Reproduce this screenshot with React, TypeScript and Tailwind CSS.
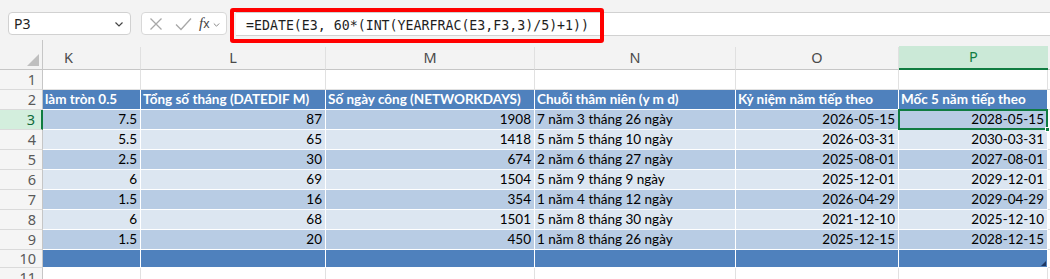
import React from "react";

const W = {
  rh: "w-[43px]",
  K: "w-[98px]",
  L: "w-[185px]",
  M: "w-[209px]",
  N: "w-[201px]",
  O: "w-[163px]",
  P: "w-[149px]",
};

const colKeys = ["K", "L", "M", "N", "O", "P"] as const;
const colW = [W.K, W.L, W.M, W.N, W.O, W.P];

const headers = [
  "làm tròn 0.5",
  "Tổng số tháng (DATEDIF M)",
  "Số ngày công (NETWORKDAYS)",
  "Chuỗi thâm niên (y m d)",
  "Kỷ niệm năm tiếp theo",
  "Mốc 5 năm tiếp theo",
];

const data: string[][] = [
  ["7.5", "87", "1908", "7 năm 3 tháng 26 ngày", "2026-05-15", "2028-05-15"],
  ["5.5", "65", "1418", "5 năm 5 tháng 10 ngày", "2026-03-31", "2030-03-31"],
  ["2.5", "30", "674", "2 năm 6 tháng 27 ngày", "2025-08-01", "2027-08-01"],
  ["6", "69", "1504", "5 năm 9 tháng 9 ngày", "2025-12-01", "2029-12-01"],
  ["1.5", "16", "354", "1 năm 4 tháng 12 ngày", "2026-04-29", "2029-04-29"],
  ["6", "68", "1501", "5 năm 8 tháng 30 ngày", "2021-12-10", "2025-12-10"],
  ["1.5", "20", "450", "1 năm 8 tháng 26 ngày", "2025-12-15", "2028-12-15"],
];

const uiFont = { fontFamily: '"Noto Sans", "Open Sans", sans-serif' };
const cellFont = { fontFamily: 'Lato, "Noto Sans", sans-serif' };

function RowHeader({ n, h, active }: { n: number; h: string; active?: boolean }) {
  return (
    <div
      className={`${W.rh} ${h} shrink-0 flex items-center justify-end pr-[6px] text-[14.5px] border-b border-[#dadada] ${
        active
          ? "bg-[#d3eedd] text-[#0f6a3a] border-r-2 border-r-[#107c41]"
          : "bg-[#f5f5f5] text-[#5a5a5a] border-r border-r-[#c6c6c6]"
      }`}
      style={uiFont}
    >
      {n}
    </div>
  );
}

function EmptyRow({ n, h }: { n: number; h: string }) {
  return (
    <div className={`flex ${h}`}>
      <RowHeader n={n} h={h} />
      {colW.map((w, i) => (
        <div key={i} className={`${w} shrink-0 bg-white border-r border-b border-[#e1e1e1]`} />
      ))}
      <div className="flex-1 bg-white border-b border-[#e1e1e1]" />
    </div>
  );
}

export default function App() {
  return (
    <div className="w-[1050px] h-[279px] overflow-hidden bg-[#f3f3f3] text-black" style={cellFont}>
      {/* Formula bar area */}
      <div className="h-[40px] flex items-start pt-[8px]">
        <div className="ml-[8px] mt-[4px] w-[123px] h-[23px] bg-white border border-[#d1d1d1] rounded-[4px] flex items-center justify-between pl-[5px] pr-[5px]">
          <span className="text-[14px] text-[#222]" style={uiFont}>P3</span>
          <svg width="12" height="12" viewBox="0 0 12 12" className="text-[#444]">
            <path d="M2.5 4.5 L6 8 L9.5 4.5" fill="none" stroke="currentColor" strokeWidth="1.2" />
          </svg>
        </div>
        <div className="ml-[10px] mt-[4px] w-[86px] h-[23px] bg-white border border-[#d8d8d8] rounded-[4px] flex items-center pl-[7px]">
          <svg width="14" height="14" viewBox="0 0 14 14" className="text-[#a8a8a8]">
            <path d="M1.5 1.5 L12.5 12.5 M12.5 1.5 L1.5 12.5" stroke="currentColor" strokeWidth="1.3" fill="none" />
          </svg>
          <svg width="17" height="14" viewBox="0 0 17 14" className="ml-[12px] text-[#a8a8a8]">
            <path d="M1 7.5 L6 12.5 L16 1.5" stroke="currentColor" strokeWidth="1.3" fill="none" />
          </svg>
          <span className="ml-[7px] text-[15px] italic text-[#444] leading-none" style={{ fontFamily: '"Liberation Serif", serif' }}>
            f<span className="text-[12px] not-italic" style={uiFont}>x</span>
          </span>
          <svg width="7" height="6" viewBox="0 0 7 6" className="ml-[3px] mt-[2px] text-[#888]">
            <path d="M0.8 1.5 L3.5 4.2 L6.2 1.5" fill="none" stroke="currentColor" strokeWidth="1" />
          </svg>
        </div>
        <div className="ml-[3px] flex-1 relative h-[35px]">
          <div className="absolute left-[6px] right-0 top-[4px] h-[24px] bg-white border-t border-b border-[#d1d1d1]" />
          <div className="absolute left-0 top-0 w-[374px] h-[35px] border-[4px] border-[#ff0000] rounded-[3px] flex items-center pl-[12px]">
            <span className="text-[13.25px] text-[#1e1e1e] whitespace-nowrap" style={{ fontFamily: '"DejaVu Sans Mono", "Liberation Mono", monospace' }}>
              =EDATE(E3, 60*(INT(YEARFRAC(E3,F3,3)/5)+1))
            </span>
          </div>
        </div>
      </div>

      {/* Column header */}
      <div className="flex h-[30px]">
        <div className={`${W.rh} shrink-0 h-full border-r border-[#c6c6c6] border-b border-b-[#c6c6c6] flex items-end justify-end pr-[3px] pb-[3px]`}>
          <svg width="12" height="12" viewBox="0 0 12 12">
            <path d="M12 0 L12 12 L0 12 Z" fill="#bfbfbf" />
          </svg>
        </div>
        {colKeys.map((k, i) => (
          <div key={k} className={`${colW[i]} shrink-0 h-full flex flex-col`}>
            <div className="h-[10px]" />
            {k === "P" ? (
              <div className="flex-1 bg-[#cbe9d7] border-b-2 border-[#107c41] flex items-center justify-center text-[14.5px] text-[#107c41]" style={uiFont}>
                {k}
              </div>
            ) : (
              <div
                className={`flex-1 border-r border-[#e0e0e0] border-b border-b-[#c6c6c6] flex items-center text-[14.5px] text-[#4a4a4a] ${
                  k === "K" ? "justify-start pl-[21px]" : "justify-center"
                }`}
                style={uiFont}
              >
                {k}
              </div>
            )}
          </div>
        ))}
        <div className="flex-1 flex flex-col">
          <div className="h-[10px]" />
          <div className="flex-1 border-b border-[#c6c6c6]" />
        </div>
      </div>

      {/* Row 1 */}
      <EmptyRow n={1} h="h-[20px]" />

      {/* Row 2: table header */}
      <div className="flex h-[20px]">
        <RowHeader n={2} h="h-[20px]" />
        {headers.map((t, i) => (
          <div
            key={i}
            className={`${colW[i]} shrink-0 bg-[#4f81bd] border-r border-b border-white flex items-center pl-[2px] text-[13.5px] font-bold text-white whitespace-nowrap overflow-hidden`}
          >
            {t}
          </div>
        ))}
        <div className="flex-1 bg-white border-b border-[#e1e1e1]" />
      </div>

      {/* Data rows */}
      {data.map((row, r) => {
        const bg = r % 2 === 0 ? "bg-[#b8cce4]" : "bg-[#dce6f1]";
        return (
          <div key={r} className="flex h-[20px]">
            <RowHeader n={r + 3} h="h-[20px]" active={r === 0} />
            {row.map((v, c) => (
              <div
                key={c}
                className={`${colW[c]} shrink-0 ${bg} border-r border-b border-white flex items-center text-[13.5px] whitespace-nowrap ${
                  c === 3 ? "justify-start pl-[2px]" : "justify-end pr-[3px]"
                } ${r === 0 && c === 5 ? "relative" : ""}`}
              >
                {v}
                {r === 0 && c === 5 && (
                  <>
                    <div className="absolute -left-[1px] -top-[1px] -right-[1px] -bottom-[1px] border-2 border-[#107c41]" />
                    <div className="absolute -right-[3px] -bottom-[3px] w-[5px] h-[5px] bg-[#107c41] border border-white" />
                  </>
                )}
              </div>
            ))}
            <div className="flex-1 bg-white border-b border-[#e1e1e1]" />
          </div>
        );
      })}

      {/* Row 10: total bar */}
      <div className="flex h-[18px]">
        <RowHeader n={10} h="h-[18px]" />
        {colW.map((w, i) => (
          <div key={i} className={`${w} shrink-0 bg-[#4f81bd] border-r border-b border-white ${i === 5 ? "relative" : ""}`}>
            {i === 5 && (
              <svg width="5" height="5" viewBox="0 0 5 5" className="absolute right-[1px] bottom-[1px]">
                <path d="M5 0 L5 5 L0 5 Z" fill="#1f3864" />
              </svg>
            )}
          </div>
        ))}
        <div className="flex-1 bg-white border-b border-[#e1e1e1]" />
      </div>

      {/* Row 11 */}
      <EmptyRow n={11} h="h-[20px]" />
    </div>
  );
}
